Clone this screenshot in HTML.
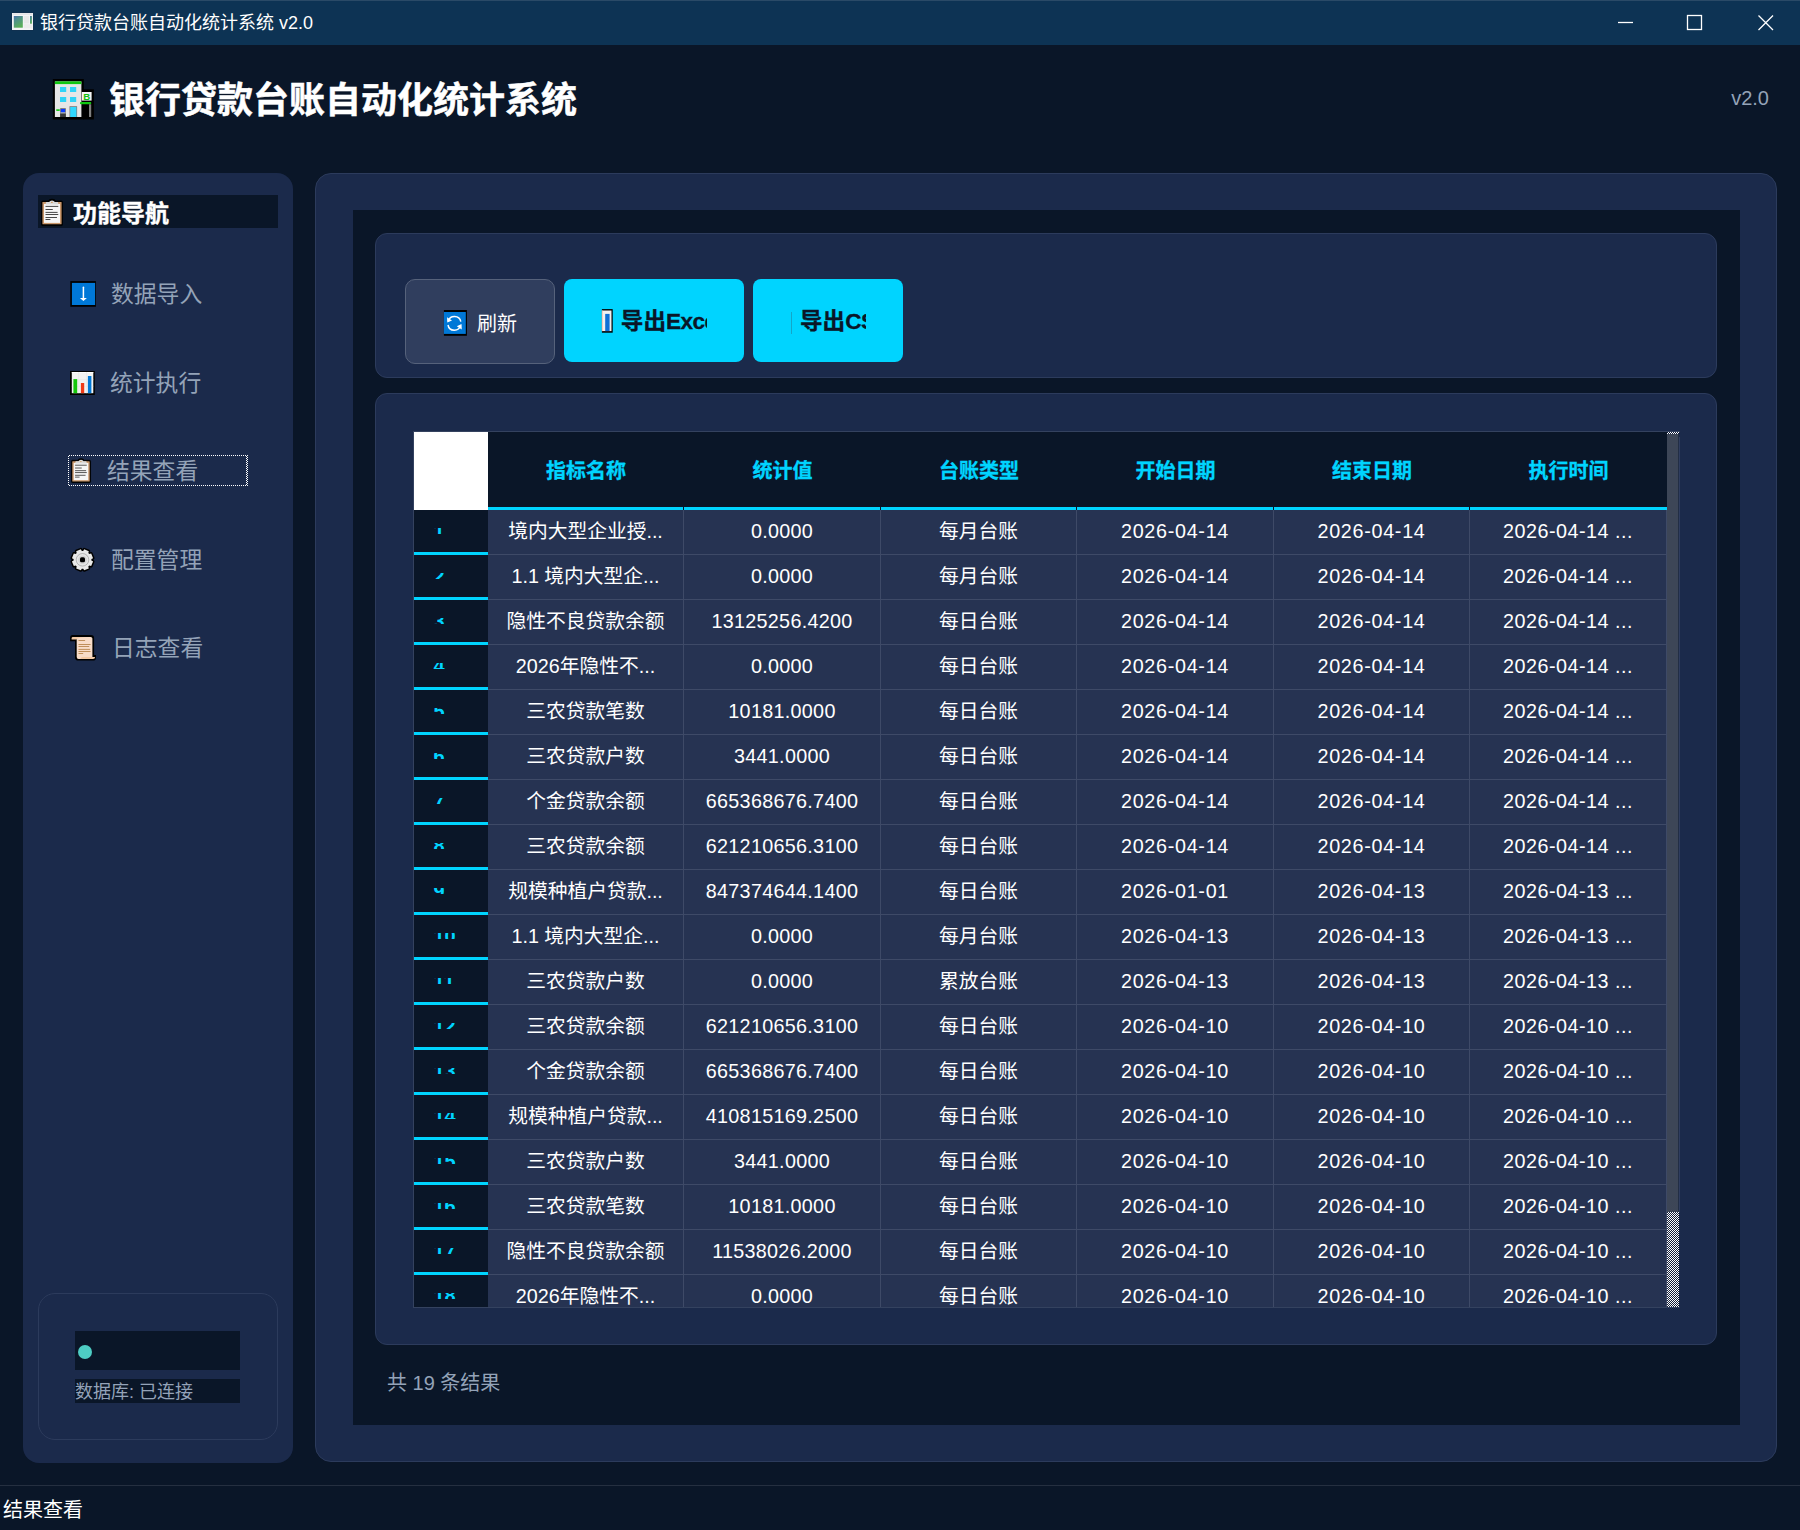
<!DOCTYPE html>
<html lang="zh-CN"><head><meta charset="utf-8"><title>银行贷款台账自动化统计系统 v2.0</title>
<style>
*{box-sizing:border-box;margin:0;padding:0}
html,body{width:1800px;height:1530px;overflow:hidden;background:#0a1628}
body{position:relative;font-family:"Liberation Sans","Noto Sans CJK SC",sans-serif;color:#fff}
.abs{position:absolute}
#titlebar{position:absolute;left:0;top:0;width:1800px;height:45px;background:#0d3354;box-shadow:inset 0 1px 0 #2a4a67}
#titlebar .tt{position:absolute;left:40px;top:0;height:45px;line-height:46px;font-size:18px;color:#fff;white-space:nowrap}
#apptitle{position:absolute;left:109px;top:71px;height:60px;line-height:60px;font-size:36px;font-weight:bold;color:#fff;white-space:nowrap}
#ver{position:absolute;right:31px;top:84px;height:28px;line-height:28px;font-size:20px;color:#94a3b8}
#side{position:absolute;left:23px;top:173px;width:269.5px;height:1289.5px;background:#1b2a4b;border-radius:16px}
#navh{position:absolute;left:38px;top:195px;width:240px;height:33px;background:#0a1628}
#navh .t{position:absolute;left:35px;top:2px;height:33px;line-height:33px;font-size:24px;font-weight:bold;color:#fff;white-space:nowrap}
.nav{position:absolute;height:40px;line-height:40px;font-size:22.8px;color:#94a3b8;white-space:nowrap}
#focus{position:absolute;left:0;top:0}
#focus i{position:absolute;display:block}
#focus .ft{left:69px;top:455px;width:179px;height:1px;background:repeating-linear-gradient(90deg,#fff 0 1px,transparent 1px 2px)}
#focus .fb{left:69px;top:485px;width:179px;height:1px;background:repeating-linear-gradient(90deg,#fff 0 1px,transparent 1px 2px)}
#focus .fl{left:68px;top:456px;width:1px;height:29px;background:repeating-linear-gradient(180deg,#fff 0 1px,transparent 1px 2px)}
#focus .fr{left:246px;top:456px;width:2px;height:29px;background-image:repeating-conic-gradient(transparent 0 25%,#fff 0 50%);background-size:2px 2px}
#stat{position:absolute;left:38px;top:1293px;width:240px;height:147px;border:1px solid #2c3b5c;border-radius:17px;background:#1b2a4b}
#st1{position:absolute;left:75px;top:1331px;width:165px;height:39px;background:#0a1628}
#dot{position:absolute;left:77.5px;top:1345px;width:14px;height:14px;border-radius:50%;background:#4ecdc4}
#st2{position:absolute;left:75px;top:1379px;width:165px;height:24px;background:#0a1628;font-size:18px;line-height:27px;overflow:hidden;color:#94a3b8;white-space:nowrap}
#main{position:absolute;left:315px;top:173px;width:1462.3px;height:1289px;background:#1b2a4b;border:1px solid #2c3b5c;border-radius:16px}
#inner{position:absolute;left:353px;top:210px;width:1387px;height:1215px;background:#0a1628}
.card{position:absolute;background:#1b2a4b;border:1px solid #2c3b5c;border-radius:12px}
#tb{left:375px;top:233px;width:1342px;height:145px}
#tc{left:375px;top:393px;width:1342px;height:952px}
.btn{position:absolute;border-radius:9px;overflow:hidden}
#b1{left:405px;top:278.8px;width:149.8px;height:85.7px;background:#303e5e;border:1px solid #56627b;border-radius:10px}
#b2{left:563.8px;top:278.8px;width:180.2px;height:83px;background:#00d4ff;border-radius:8px}
#b3{left:753px;top:278.8px;width:150px;height:83px;background:#00d4ff;border-radius:8px}
.btn .t{position:absolute;white-space:nowrap;overflow:hidden}
#foot{position:absolute;left:387px;top:1368px;height:30px;line-height:30px;font-size:20px;color:#94a3b8;white-space:nowrap}
#sline{position:absolute;left:0;top:1485px;width:1800px;height:1px;background:#252f40}
#sbar{position:absolute;left:3px;top:1495px;height:30px;line-height:30px;font-size:20px;color:#fff;white-space:nowrap}
/* table */
.tbl{position:absolute;left:414px;top:432px;width:1266px;height:875px;overflow:hidden;background:#263352}
.corner{position:absolute;left:0;top:0;width:74px;height:78px;background:#fff}
.hrow{position:absolute;left:74px;top:0;width:1179px;height:78px;background:#0a1628;border-bottom:3px solid #00d4ff;display:flex}
.hc{flex:none;width:196px;text-align:center;line-height:78px;font-size:20px;font-weight:bold;color:#00d4ff;white-space:nowrap}
.row{position:relative;height:45px;display:flex;width:1253px}
.row:first-of-type{margin-top:0}
.tbl .row:nth-child(3){margin-top:78px}
.rh{width:74px;flex:none;height:45px;background:#0a1628;border-bottom:3px solid #00d4ff;position:relative}
.clip{position:absolute;left:19.4px;top:18px;width:50px;height:6px;overflow:hidden;text-align:left}
.clip span{display:block;margin-top:-8.5px;line-height:22px;font-size:20px;font-weight:bold;color:#00d4ff}
.c{width:196px;flex:none;height:45px;line-height:42px;text-align:center;font-size:19.75px;color:#fff;white-space:nowrap;border-right:1px solid #3e4a67;border-bottom:1px solid #3e4a67}
.sb{position:absolute;left:1253px;top:0;width:13px;height:875px;background:#1c2a48}
.sbt{position:absolute;left:0;top:2px;width:11px;height:778px;background:#3d4657;border-right:0}
.sbd{position:absolute;left:0;top:780px;width:12px;height:95px;background-image:repeating-conic-gradient(#fff 0 25%,#141f3a 0 50%);background-size:2px 2px}
.sbu{position:absolute;left:0;top:0;width:12px;height:2px;background-image:repeating-conic-gradient(#fff 0 25%,#141f3a 0 50%);background-size:2px 2px}
.sbe{position:absolute;left:11px;top:2px;width:1px;height:778px;background:#222e45}

.hc:nth-child(even),.row .c:nth-child(odd){width:197px}
.row .c:nth-child(3){letter-spacing:0.3px}
.row .c:nth-child(n+5){letter-spacing:0.7px}
.row .c:nth-child(7){letter-spacing:0.5px}

#tbord{position:absolute;left:413px;top:431px;width:1267px;height:877px;border:1px solid #34425f;border-right-color:#2d3c5e}
.hc{position:relative}
.hc:not(:last-child)::after{content:"";position:absolute;right:0;bottom:-3px;width:1px;height:3px;background:#0a1628}

#apptitle{-webkit-text-stroke:0.5px #fff}
#navh .t{-webkit-text-stroke:0.35px #fff}
.hc{-webkit-text-stroke:0.3px #00d4ff}
#b2 .t,#b3 .t{-webkit-text-stroke:0.3px #0a1628}
.sbr{position:absolute;left:12px;top:5px;width:1px;height:775px;background:#2f3d5f}

</style></head><body>
<div id="titlebar">
<svg class="abs" style="left:11px;top:12px" width="24" height="20" viewBox="11 12 24 20">
<defs><linearGradient id="gi" x1="0" y1="0" x2="0.5" y2="1"><stop offset="0" stop-color="#4a6ea9"/><stop offset="0.35" stop-color="#4e8f8d"/><stop offset="1" stop-color="#5aae5a"/></linearGradient></defs>
<rect x="11.6" y="12.6" width="21.8" height="17.8" fill="#1c2c44" opacity="0.55"/>
<rect x="12" y="13" width="21" height="17" fill="#f4f4f6"/>
<rect x="12.6" y="13.4" width="19.8" height="1.3" fill="#dedee2"/>
<rect x="13.8" y="16" width="9" height="11.7" fill="url(#gi)"/>
<rect x="23.8" y="16" width="5.2" height="7.4" fill="#e9e9e9"/>
<rect x="23.8" y="24.2" width="8.2" height="4" fill="#ececec"/>
<rect x="30" y="16" width="1.9" height="7.7" fill="url(#gi)"/>
</svg>
<div class="tt">银行贷款台账自动化统计系统 v2.0</div>
<svg class="abs" style="left:1610px;top:7px" width="170" height="30" viewBox="0 0 170 30" fill="none" stroke="#fff" stroke-width="1.3"><path d="M8 15.5H23"/><rect x="77.5" y="8.5" width="14" height="14"/><path d="M148.5 8.5L163 23M163 8.5L148.5 23"/></svg>
</div>
<div id="apptitle">银行贷款台账自动化统计系统</div>
<div id="ver">v2.0</div>
<div id="side"></div>
<div id="navh"><div class="t">功能导航</div></div>
<div class="nav" style="left:111px;top:274px">数据导入</div>
<div class="nav" style="left:110px;top:363px">统计执行</div>
<div class="nav" style="left:107px;top:451px">结果查看</div>
<div class="nav" style="left:111px;top:540px">配置管理</div>
<div class="nav" style="left:112px;top:628px">日志查看</div>
<div id="focus"><i class="ft"></i><i class="fb"></i><i class="fl"></i><i class="fr"></i></div>
<svg class="abs" style="left:52px;top:78px" width="44" height="44" viewBox="52 78 44 44">
<rect x="52.8" y="79" width="31" height="40.5" fill="#000"/>
<rect x="83" y="89.3" width="10.9" height="30.2" fill="#000"/>
<rect x="54.9" y="81.4" width="26.5" height="35.6" fill="#e6e6e6"/>
<rect x="54.9" y="81.4" width="26.5" height="2.7" fill="#10c810"/>
<rect x="60" y="87" width="6.2" height="5" fill="#2fd4f7"/><rect x="70" y="87" width="6.2" height="5" fill="#2fd4f7"/>
<rect x="60" y="97" width="6.2" height="5" fill="#2fd4f7"/><rect x="70" y="97" width="6.2" height="5" fill="#2fd4f7"/>
<rect x="69.5" y="106.2" width="7.6" height="10.8" fill="#7a7a7a"/><rect x="70.2" y="107" width="6.2" height="10" fill="#2fd8ff"/>
<rect x="60.2" y="108.2" width="5.6" height="8.8" fill="#6a6a6a"/><rect x="60.9" y="109" width="4.2" height="3.4" fill="#0a3cff"/><rect x="60.5" y="112.6" width="5" height="0.9" fill="#fff"/><rect x="60.2" y="113.5" width="5.6" height="3.5" fill="#3a3a3a"/>
<rect x="56" y="109.2" width="4" height="1.7" rx="0.8" fill="#18c818"/>
<rect x="81.8" y="92" width="9.8" height="8.6" fill="#f4f4f4"/>
<text x="86.7" y="99.6" font-family="Liberation Sans, sans-serif" font-weight="bold" font-size="9" text-anchor="middle" fill="#10c010" textLength="7" lengthAdjust="spacingAndGlyphs">B</text>
<rect x="80" y="102" width="11.2" height="2.3" rx="0.8" fill="#10c810"/>
<rect x="89" y="104.3" width="2.2" height="12.7" fill="#808080"/>
</svg>
<svg class="abs" style="left:41px;top:199px;overflow:visible" width="22" height="27" viewBox="0 0 22 27">
<path d="M0.5 3.2Q0.5 2 1.7 2H7.2Q8.2 0.2 11 0.2Q13.8 0.2 14.8 2H20.3Q21.5 2 21.5 3.2V25.4Q21.5 26.6 20.3 26.6H1.7Q0.5 26.6 0.5 25.4Z" fill="#000" stroke="#000" stroke-width="0.9" stroke-linejoin="round"/>
<rect x="1.4" y="3" width="19.2" height="22.3" rx="0.6" fill="#c9976b"/>
<rect x="3" y="4.9" width="16" height="19" fill="#f6f6f6"/>
<path d="M4.8 5.4V3.9Q4.8 3.1 5.6 3.1H8.2Q8.8 1.4 11 1.4Q13.2 1.4 13.8 3.1H16.4Q17.2 3.1 17.2 3.9V5.4Z" fill="#d9d9d9"/>
<circle cx="10.9" cy="3.4" r="0.7" fill="#d08a3c"/>
<g stroke="#333" stroke-width="0.9" stroke-linecap="round"><path d="M4.9 7.4H16.9M4.9 10.5H11.4M4.9 13.4H16.2M4.9 15.5H16.9M4.9 18.5H15.6M4.9 20.5H9"/></g>
</svg>
<svg class="abs" style="left:70px;top:281px" width="26" height="26" viewBox="70 281 26 26">
<rect x="70.3" y="281.1" width="25.6" height="25.7" fill="#000"/>
<rect x="71.9" y="282.9" width="23.2" height="22.1" fill="#0078d7"/>
<path d="M83.4 287.2V299.5" stroke="#fff" stroke-width="1.5" stroke-linecap="round"/>
<path d="M79.9 297.9H86.9L83.4 300.9Z" fill="#fff"/>
</svg>
<svg class="abs" style="left:70px;top:371px" width="25" height="24" viewBox="70 371 25 24">
<rect x="70" y="370.9" width="24.8" height="24.2" rx="0.4" fill="#000"/>
<rect x="71.8" y="372" width="21.5" height="21.2" fill="#f2f2f2"/>
<rect x="71.8" y="372" width="21.5" height="0.9" fill="#fff"/>
<path d="M71.8 379.6H93.3M71.8 386.3H93.3M78.7 372V393.2M86.6 372V393.2" stroke="#e2e2e2" stroke-width="0.5"/>
<rect x="73.4" y="379.1" width="3.8" height="14.1" fill="#16c60c"/>
<rect x="80.9" y="383" width="3.3" height="10.2" fill="#f03a17"/>
<rect x="87.9" y="376" width="3.5" height="17.2" fill="#0078d7"/>
</svg>
<svg class="abs" style="left:71px;top:458px;overflow:visible" width="20" height="25.5" viewBox="0 0 22 27">
<path d="M0.5 3.2Q0.5 2 1.7 2H7.2Q8.2 0.2 11 0.2Q13.8 0.2 14.8 2H20.3Q21.5 2 21.5 3.2V25.4Q21.5 26.6 20.3 26.6H1.7Q0.5 26.6 0.5 25.4Z" fill="#000" stroke="#000" stroke-width="0.9" stroke-linejoin="round"/>
<rect x="1.4" y="3" width="19.2" height="22.3" rx="0.6" fill="#c9976b"/>
<rect x="3" y="4.9" width="16" height="19" fill="#f6f6f6"/>
<path d="M4.8 5.4V3.9Q4.8 3.1 5.6 3.1H8.2Q8.8 1.4 11 1.4Q13.2 1.4 13.8 3.1H16.4Q17.2 3.1 17.2 3.9V5.4Z" fill="#d9d9d9"/>
<circle cx="10.9" cy="3.4" r="0.7" fill="#d08a3c"/>
<g stroke="#333" stroke-width="0.9" stroke-linecap="round"><path d="M4.9 7.4H16.9M4.9 10.5H11.4M4.9 13.4H16.2M4.9 15.5H16.9M4.9 18.5H15.6M4.9 20.5H9"/></g>
</svg>
<svg class="abs" style="left:68px;top:545px" width="30" height="30" viewBox="68 545 30 30">
<path d="M91.37 560.50 L93.07 561.47 L91.16 566.09 L89.27 565.58 L88.28 566.57 L88.79 568.46 L84.17 570.37 L83.20 568.67 L81.80 568.67 L80.83 570.37 L76.21 568.46 L76.72 566.57 L75.73 565.58 L73.84 566.09 L71.93 561.47 L73.63 560.50 L73.63 559.10 L71.93 558.13 L73.84 553.51 L75.73 554.02 L76.72 553.03 L76.21 551.14 L80.83 549.23 L81.80 550.93 L83.20 550.93 L84.17 549.23 L88.79 551.14 L88.28 553.03 L89.27 554.02 L91.16 553.51 L93.07 558.13 L91.37 559.10Z" fill="#000" stroke="#000" stroke-width="2.9" stroke-linejoin="round"/>
<path d="M91.37 560.50 L93.07 561.47 L91.16 566.09 L89.27 565.58 L88.28 566.57 L88.79 568.46 L84.17 570.37 L83.20 568.67 L81.80 568.67 L80.83 570.37 L76.21 568.46 L76.72 566.57 L75.73 565.58 L73.84 566.09 L71.93 561.47 L73.63 560.50 L73.63 559.10 L71.93 558.13 L73.84 553.51 L75.73 554.02 L76.72 553.03 L76.21 551.14 L80.83 549.23 L81.80 550.93 L83.20 550.93 L84.17 549.23 L88.79 551.14 L88.28 553.03 L89.27 554.02 L91.16 553.51 L93.07 558.13 L91.37 559.10Z" fill="#e9e9e9"/>
<circle cx="82.5" cy="559.8" r="6.3" fill="#e6e6e6" stroke="#7c7c7c" stroke-width="0.45"/>
<circle cx="82.5" cy="559.8" r="4.3" fill="#d4d4d4"/>
<rect x="80.0" y="557.3" width="5" height="5" rx="1.6" fill="#000"/>
</svg>
<svg class="abs" style="left:69px;top:634px" width="28" height="28" viewBox="69 634 28 28">
<path d="M72.6 635.1H90.8Q94.1 635.1 94.1 638.4V654.9H96V657.4Q96 660.6 92.8 660.6H78.4Q75 660.6 75 657.2V641.2H70.1V638Q70.1 635.1 72.6 635.1Z" fill="#000"/>
<path d="M76.7 639.3V657Q76.7 659 78.6 659H92.4V638.6Q92.4 636.9 90.6 636.9H74Q76.7 636.9 76.7 639.3Z" fill="#f8dcc8"/>
<path d="M73 636.9H90Q76.6 637 76.6 639.4H71.6V638.3Q71.6 636.9 73 636.9Z" fill="#f3c9a5"/>
<path d="M81.5 657H95.1Q95.1 659 93 659H78.5Q81.5 659 81.5 657Z" fill="#f3c9a5"/>
<g stroke="#b8864e" stroke-width="0.9" stroke-linecap="round"><path d="M78.9 640.5H84.7M78.9 644.5H90.2M78.9 646.5H88.8M78.9 649.4H89.8M78.9 651.5H90.2M78.9 653.5H82.8"/></g>
</svg>
<div id="stat"></div>
<div id="st1"></div><div id="dot"></div>
<div id="st2">数据库: 已连接</div>
<div id="main"></div>
<div id="inner"></div>
<div class="card" id="tb"></div>
<div class="btn" id="b1"><div class="t" style="left:71px;top:29px;font-size:20px;line-height:30px;color:#fff">刷新</div></div>
<div class="btn" id="b2"><div class="t" style="left:57px;top:28px;width:86px;font-size:22.6px;line-height:30px;font-weight:bold;color:#0a1628">导出<span style="letter-spacing:-0.6px">Excel</span></div></div>
<div class="btn" id="b3"><div class="t" style="left:47px;top:28px;width:66px;font-size:22.6px;line-height:30px;font-weight:bold;color:#0a1628">导出<span style="letter-spacing:-0.6px">CSV</span></div></div>
<svg class="abs" style="left:443px;top:309px" width="25" height="28" viewBox="443 309 25 28">
<rect x="443.9" y="310" width="23" height="25.8" fill="#000"/>
<rect x="443.9" y="312" width="21.9" height="21.9" fill="#0078d7"/>
<g fill="none" stroke="#fff" stroke-width="1.5"><path d="M448.3 321.3A6.4 6.4 0 0 1 460.8 321.6"/><path d="M460.5 325.4A6.4 6.4 0 0 1 448 325"/></g>
<path d="M447 317.2L447.3 322.6L452 320.4Z" fill="#fff"/><path d="M461.8 329.4L461.5 324L456.8 326.2Z" fill="#fff"/>
</svg>
<svg class="abs" style="left:601px;top:309px" width="12" height="24" viewBox="601 309 12 24">
<rect x="601.9" y="309.1" width="10.8" height="23.6" fill="#000"/>
<rect x="601.9" y="310.5" width="9.6" height="20.6" fill="#f0f0f0"/>
<rect x="601.9" y="310.5" width="0.8" height="20.6" fill="#f8b8a0"/>
<rect x="605.2" y="313.9" width="4.4" height="17.2" fill="#0f6fd6"/>
</svg>
<div class="abs" style="left:791px;top:312px;width:1px;height:22px;background:#14a6c8"></div>
<div class="card" id="tc"></div>
<div id="tbord"></div>
<div class="tbl">
<div class="corner"></div>
<div class="hrow">
<div class="hc">指标名称</div>
<div class="hc">统计值</div>
<div class="hc">台账类型</div>
<div class="hc">开始日期</div>
<div class="hc">结束日期</div>
<div class="hc">执行时间</div>
</div>
<div class="row">
<div class="rh"><span class="clip"><span>1</span></span></div>
<div class="c">境内大型企业授...</div>
<div class="c">0.0000</div>
<div class="c">每月台账</div>
<div class="c">2026-04-14</div>
<div class="c">2026-04-14</div>
<div class="c">2026-04-14 ...</div>
</div>
<div class="row">
<div class="rh"><span class="clip"><span>2</span></span></div>
<div class="c">1.1 境内大型企...</div>
<div class="c">0.0000</div>
<div class="c">每月台账</div>
<div class="c">2026-04-14</div>
<div class="c">2026-04-14</div>
<div class="c">2026-04-14 ...</div>
</div>
<div class="row">
<div class="rh"><span class="clip"><span>3</span></span></div>
<div class="c">隐性不良贷款余额</div>
<div class="c">13125256.4200</div>
<div class="c">每日台账</div>
<div class="c">2026-04-14</div>
<div class="c">2026-04-14</div>
<div class="c">2026-04-14 ...</div>
</div>
<div class="row">
<div class="rh"><span class="clip"><span>4</span></span></div>
<div class="c">2026年隐性不...</div>
<div class="c">0.0000</div>
<div class="c">每日台账</div>
<div class="c">2026-04-14</div>
<div class="c">2026-04-14</div>
<div class="c">2026-04-14 ...</div>
</div>
<div class="row">
<div class="rh"><span class="clip"><span>5</span></span></div>
<div class="c">三农贷款笔数</div>
<div class="c">10181.0000</div>
<div class="c">每日台账</div>
<div class="c">2026-04-14</div>
<div class="c">2026-04-14</div>
<div class="c">2026-04-14 ...</div>
</div>
<div class="row">
<div class="rh"><span class="clip"><span>6</span></span></div>
<div class="c">三农贷款户数</div>
<div class="c">3441.0000</div>
<div class="c">每日台账</div>
<div class="c">2026-04-14</div>
<div class="c">2026-04-14</div>
<div class="c">2026-04-14 ...</div>
</div>
<div class="row">
<div class="rh"><span class="clip"><span>7</span></span></div>
<div class="c">个金贷款余额</div>
<div class="c">665368676.7400</div>
<div class="c">每日台账</div>
<div class="c">2026-04-14</div>
<div class="c">2026-04-14</div>
<div class="c">2026-04-14 ...</div>
</div>
<div class="row">
<div class="rh"><span class="clip"><span>8</span></span></div>
<div class="c">三农贷款余额</div>
<div class="c">621210656.3100</div>
<div class="c">每日台账</div>
<div class="c">2026-04-14</div>
<div class="c">2026-04-14</div>
<div class="c">2026-04-14 ...</div>
</div>
<div class="row">
<div class="rh"><span class="clip"><span>9</span></span></div>
<div class="c">规模种植户贷款...</div>
<div class="c">847374644.1400</div>
<div class="c">每日台账</div>
<div class="c">2026-01-01</div>
<div class="c">2026-04-13</div>
<div class="c">2026-04-13 ...</div>
</div>
<div class="row">
<div class="rh"><span class="clip"><span>10</span></span></div>
<div class="c">1.1 境内大型企...</div>
<div class="c">0.0000</div>
<div class="c">每月台账</div>
<div class="c">2026-04-13</div>
<div class="c">2026-04-13</div>
<div class="c">2026-04-13 ...</div>
</div>
<div class="row">
<div class="rh"><span class="clip"><span>11</span></span></div>
<div class="c">三农贷款户数</div>
<div class="c">0.0000</div>
<div class="c">累放台账</div>
<div class="c">2026-04-13</div>
<div class="c">2026-04-13</div>
<div class="c">2026-04-13 ...</div>
</div>
<div class="row">
<div class="rh"><span class="clip"><span>12</span></span></div>
<div class="c">三农贷款余额</div>
<div class="c">621210656.3100</div>
<div class="c">每日台账</div>
<div class="c">2026-04-10</div>
<div class="c">2026-04-10</div>
<div class="c">2026-04-10 ...</div>
</div>
<div class="row">
<div class="rh"><span class="clip"><span>13</span></span></div>
<div class="c">个金贷款余额</div>
<div class="c">665368676.7400</div>
<div class="c">每日台账</div>
<div class="c">2026-04-10</div>
<div class="c">2026-04-10</div>
<div class="c">2026-04-10 ...</div>
</div>
<div class="row">
<div class="rh"><span class="clip"><span>14</span></span></div>
<div class="c">规模种植户贷款...</div>
<div class="c">410815169.2500</div>
<div class="c">每日台账</div>
<div class="c">2026-04-10</div>
<div class="c">2026-04-10</div>
<div class="c">2026-04-10 ...</div>
</div>
<div class="row">
<div class="rh"><span class="clip"><span>15</span></span></div>
<div class="c">三农贷款户数</div>
<div class="c">3441.0000</div>
<div class="c">每日台账</div>
<div class="c">2026-04-10</div>
<div class="c">2026-04-10</div>
<div class="c">2026-04-10 ...</div>
</div>
<div class="row">
<div class="rh"><span class="clip"><span>16</span></span></div>
<div class="c">三农贷款笔数</div>
<div class="c">10181.0000</div>
<div class="c">每日台账</div>
<div class="c">2026-04-10</div>
<div class="c">2026-04-10</div>
<div class="c">2026-04-10 ...</div>
</div>
<div class="row">
<div class="rh"><span class="clip"><span>17</span></span></div>
<div class="c">隐性不良贷款余额</div>
<div class="c">11538026.2000</div>
<div class="c">每日台账</div>
<div class="c">2026-04-10</div>
<div class="c">2026-04-10</div>
<div class="c">2026-04-10 ...</div>
</div>
<div class="row">
<div class="rh"><span class="clip"><span>18</span></span></div>
<div class="c">2026年隐性不...</div>
<div class="c">0.0000</div>
<div class="c">每日台账</div>
<div class="c">2026-04-10</div>
<div class="c">2026-04-10</div>
<div class="c">2026-04-10 ...</div>
</div>
<div class="sb"><div class="sbu"></div><div class="sbt"></div><div class="sbe"></div><div class="sbr"></div><div class="sbd"></div></div>
</div>
<div id="foot">共 19 条结果</div>
<div id="sline"></div>
<div id="sbar">结果查看</div>

</body></html>
